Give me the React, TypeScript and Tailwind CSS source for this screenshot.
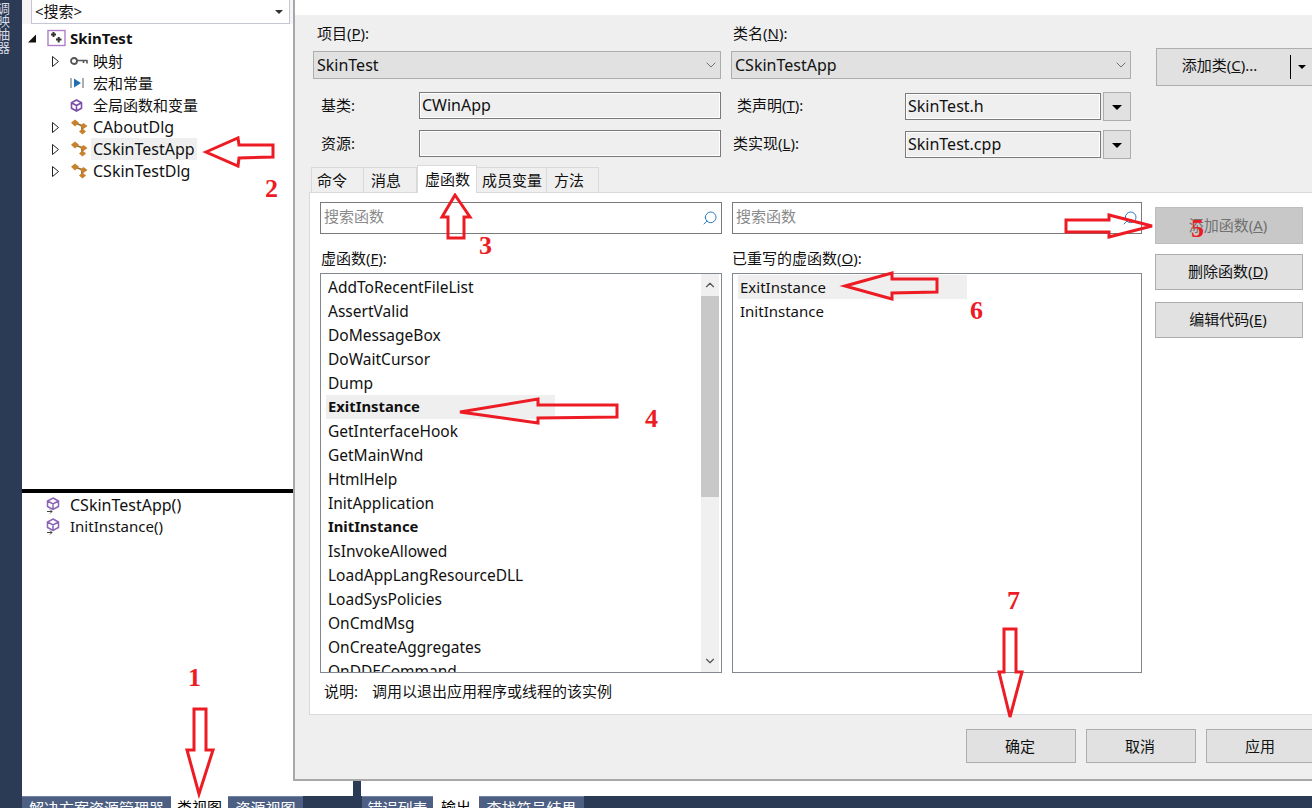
import type { ReactNode } from "react";
import { ChevronDown, ChevronUp, Search } from "lucide-react";

const fn_list = [
  "AddToRecentFileList",
  "AssertValid",
  "DoMessageBox",
  "DoWaitCursor",
  "Dump",
  "ExitInstance",
  "GetInterfaceHook",
  "GetMainWnd",
  "HtmlHelp",
  "InitApplication",
  "InitInstance",
  "IsInvokeAllowed",
  "LoadAppLangResourceDLL",
  "LoadSysPolicies",
  "OnCmdMsg",
  "OnCreateAggregates",
  "OnDDECommand",
];

const Tri = ({ open }: { open?: boolean }) => (
  <svg width="9" height="11" viewBox="0 0 9 11" className="shrink-0">
    {open ? <path d="M0 9.5 L8 9.5 L8 1.5 Z" fill="#111" /> : <path d="M1.5 0.5 L7.5 5.5 L1.5 10.5 Z" fill="#fff" stroke="#222" />}
  </svg>
);

const KeyIcon = () => (
  <svg width="18" height="10" viewBox="0 0 18 10">
    <circle cx="4" cy="5" r="3" fill="none" stroke="#555" strokeWidth="1.8" />
    <path d="M7 4.5 H17.5 M17 4.5 V7.5 M13.5 4.5 V7" fill="none" stroke="#555" strokeWidth="1.6" />
  </svg>
);

const MacroIcon = () => (
  <svg width="14" height="12" viewBox="0 0 14 12">
    <path d="M1 1 V11 M13 1 V11" stroke="#777" strokeWidth="1.2" />
    <path d="M4 1.5 L11 6 L4 10.5 Z" fill="#1f6fb5" />
  </svg>
);

const CubeIcon = () => (
  <svg width="13" height="13" viewBox="0 0 13 13">
    <path d="M6.5 1 L11.5 3.8 V9.2 L6.5 12 L1.5 9.2 V3.8 Z M1.5 3.8 L6.5 6.5 L11.5 3.8 M6.5 6.5 V12" fill="#fff" stroke="#7a4fa8" strokeWidth="1.6" />
  </svg>
);

const ClassIcon = () => (
  <svg width="18" height="16" viewBox="0 0 18 16">
    <path d="M5 4 L13 7 M12 8 L12 12" stroke="#8a6a3a" strokeWidth="1.8" />
    <path d="M5 0.5 L9 3.8 L5 7.5 L1 3.8 Z" fill="#c9822c" />
    <path d="M13.5 4 L17.5 7 L13.5 10 L10 7 Z" fill="#c9822c" />
    <path d="M12.5 9.5 L16 12.5 L12.5 15.5 L9 12.5 Z" fill="#c9822c" />
  </svg>
);

const ProjectIcon = () => (
  <svg width="19" height="18" viewBox="0 0 19 18">
    <rect x="1" y="1.5" width="17" height="15" fill="#fff" stroke="#b07fc8" strokeWidth="1.4" />
    <path d="M4 5.5 H9 M6.5 3 V8 M9 10.5 H14.5 M11.7 8 V13.5" stroke="#333" strokeWidth="2" />
  </svg>
);

const MemberIcon = () => (
  <svg width="14" height="17" viewBox="0 0 14 17">
    <path d="M7 1 L12.5 4 V9.5 L7 12.5 L1.5 9.5 V4 Z M1.5 4 L7 7 L12.5 4 M7 7 V12.5" fill="#fff" stroke="#8a63b5" strokeWidth="1.5" />
    <path d="M1 14.5 H6 M4 12.5 L6 14.5 L4 16.5" fill="none" stroke="#444" strokeWidth="1" />
  </svg>
);

const TreeRow = ({ children, icon, tri, pad = "pl-[29px]", hl, cls = "" }: { children: ReactNode; icon: ReactNode; tri?: boolean; pad?: string; hl?: boolean; cls?: string }) => (
  <div className={`flex h-[22px] items-center ${pad}`}>
    <div className="flex w-[18px] shrink-0">{tri && <Tri />}</div>
    <div className="flex w-[22px] shrink-0 items-center pl-[1px]">{icon}</div>
    <span className={`px-[2px] leading-[22px] ${hl ? "bg-[#efefef]" : ""} ${cls}`}>{children}</span>
  </div>
);

const Combo = ({ value, w }: { value: string; w: string }) => (
  <div className={`flex h-[28px] ${w} items-center justify-between border border-[#adadad] bg-[#e1e1e1] pl-[3px] pr-[1px] text-[16px]`}>
    <span>{value}</span>
    <ChevronDown size={16} color="#555" strokeWidth={1.2} />
  </div>
);

const ReadBox = ({ value, w }: { value?: string; w: string }) => (
  <div className={`h-[27px] ${w} border border-[#7a7a7a] bg-[#efefef] pl-[2px] text-[16px] leading-[25px] shadow-[inset_0_0_0_1px_#fff]`}>{value}</div>
);

const DropBtn = () => (
  <div className="flex h-[29px] w-[28px] items-center justify-center border border-[#adadad] bg-[#e1e1e1]">
    <span className="mt-[1px] h-0 w-0 border-x-[5px] border-t-[5px] border-x-transparent border-t-black" />
  </div>
);

const Btn = ({ children, cls }: { children: ReactNode; cls: string }) => (
  <div className={`flex items-center justify-center border ${cls}`}>{children}</div>
);

const SearchBox = ({ w }: { w: string }) => (
  <div className={`flex h-[32px] ${w} items-center justify-between border border-[#7a7a7a] bg-white pl-[3px] pr-[3px] text-[#8a8a8a]`}>
    <span className="-mt-[3px]">搜索函数</span>
    <Search size={16} color="#2b7bc0" strokeWidth={1.5} className="-scale-x-100" />
  </div>
);

const Tab = ({ children, active, w, pl }: { children: ReactNode; active?: boolean; w: string; pl: string }) => (
  <div
    className={`flex ${w} ${pl} items-center border-[#d9d9d9] ${
      active ? "z-10 -mb-[1px] h-[28px] border-x border-t bg-white" : "h-[25px] border-r border-t bg-[#efefef]"
    }`}
  >
    {children}
  </div>
);

const BottomTab = ({ children, active, w }: { children: ReactNode; active?: boolean; w: string }) => (
  <div className={`h-[24px] ${w} shrink-0 text-center leading-[22px] ${active ? "bg-white text-black" : "border-t border-[#7283a6] bg-[#4d5f82] text-white"}`}>{children}</div>
);

// red annotations drawn on top of the screenshot
const arrows = [
  "206,152 238,138 239,145 273,145 273,157 239,158 238,166",
  "194,709 206,709 206,750 213,750 199,794 187,750 194,750",
  "455,195 470,217 464,217 464,238 448,238 448,217 442,217",
  "1066,220 1109,220 1109,215 1152,226 1109,237 1109,232 1066,232",
  "845,286 892,273 892,279 937,279 937,292 892,293 892,299",
  "460,412 538,399 538,405 617,405 617,417 538,418 538,423",
  "1004,629 1016,629 1016,672 1022,672 1010,717 999,672 1004,672",
];

const marks = [
  { n: "1", cls: "left-[188px] top-[663px]" },
  { n: "2", cls: "left-[265px] top-[174px]" },
  { n: "3", cls: "left-[479px] top-[231px]" },
  { n: "4", cls: "left-[645px] top-[404px]" },
  { n: "5", cls: "left-[1191px] top-[214px]" },
  { n: "6", cls: "left-[970px] top-[296px]" },
  { n: "7", cls: "left-[1007px] top-[586px]" },
];

export default function App() {
  return (
    <div className="relative flex h-[808px] w-[1312px] overflow-hidden bg-[#2b3a55] font-['Noto_Sans','Noto_Sans_CJK_SC',sans-serif] text-[15px] text-[#111]">
      <div className="w-[22px] shrink-0 overflow-hidden">
        <div className="-ml-[4px] mt-[2px] w-[14px] text-[13px] leading-[14px] text-[#d5dae6] [writing-mode:vertical-rl]">调映抽器</div>
      </div>

      <div className="flex min-w-0 flex-1 flex-col">
        <div className="flex h-[796px]">
          {/* class view */}
          <div className="flex w-[271px] shrink-0 flex-col bg-white">
            <div className="h-[24px] bg-[#f5f5f5] pl-[9px] pr-[3px]">
              <div className="flex h-[24px] items-center justify-between border-x border-b border-[#c4c8d4] bg-white pl-[3px] pr-[6px]">
                <span>&lt;搜索&gt;</span>
                <span className="h-0 w-0 border-x-[4px] border-t-[4px] border-x-transparent border-t-[#333]" />
              </div>
            </div>
            <div className="pt-[3px]">
              <TreeRow pad="pl-[6px]" cls="font-bold" icon={<ProjectIcon />}>
                SkinTest
              </TreeRow>
              <div className="-mt-[22px] flex h-[22px] items-center pl-[6px]">
                <Tri open />
              </div>
              <div className="mt-[1px]">
                <TreeRow tri icon={<KeyIcon />}>映射</TreeRow>
                <TreeRow icon={<MacroIcon />}>宏和常量</TreeRow>
                <TreeRow icon={<CubeIcon />}>全局函数和变量</TreeRow>
                <TreeRow tri cls="text-[16px]" icon={<ClassIcon />}>CAboutDlg</TreeRow>
                <TreeRow tri hl cls="text-[16px]" icon={<ClassIcon />}>CSkinTestApp</TreeRow>
                <TreeRow tri cls="text-[16px]" icon={<ClassIcon />}>CSkinTestDlg</TreeRow>
              </div>
            </div>
            <div className="mt-[307px] h-[4px] bg-black" />
            <div>
              <div className="mt-[1px] flex h-[22px] items-center pl-[24px] text-[16px]"><div className="w-[24px]"><MemberIcon /></div>CSkinTestApp()</div>
              <div className="flex h-[21px] items-center pl-[24px]"><div className="w-[24px]"><MemberIcon /></div>InitInstance()</div>
            </div>
          </div>

          {/* add class wizard */}
          <div className="flex min-w-0 flex-1 flex-col bg-white">
            <div className="h-[15px] border-l-2 border-[#a8a8a8] bg-white" />
            <div className="flex h-[766px] flex-col border-b-2 border-l-2 border-[#a8a8a8] bg-[#efefef]">
              <div className="flex h-[150px] shrink-0">
                <div className="w-[436px] shrink-0 pl-[18px] pt-[8px]">
                  <div className="h-[28px] pl-[4px] leading-[20px]">项目(<u>P</u>):</div>
                  <Combo value="SkinTest" w="w-[408px]" />
                  <div className="mt-[13px] flex items-center">
                    <span className="w-[106px] pl-[8px]">基类:</span>
                    <ReadBox value="CWinApp" w="w-[302px]" />
                  </div>
                  <div className="mt-[11px] flex items-center">
                    <span className="w-[106px] pl-[8px]">资源:</span>
                    <ReadBox w="w-[302px]" />
                  </div>
                </div>
                <div className="w-[425px] shrink-0 pt-[8px]">
                  <div className="h-[28px] pl-[2px] leading-[20px]">类名(<u>N</u>):</div>
                  <Combo value="CSkinTestApp" w="w-[400px]" />
                  <div className="mt-[13px] flex items-center">
                    <span className="-mt-[2px] w-[174px] pl-[6px]">类声明(<u>T</u>):</span>
                    <ReadBox value="SkinTest.h" w="w-[196px]" />
                    <div className="ml-[2px]"><DropBtn /></div>
                  </div>
                  <div className="mt-[9px] flex items-center">
                    <span className="-mt-[2px] w-[174px] pl-[2px]">类实现(<u>L</u>):</span>
                    <ReadBox value="SkinTest.cpp" w="w-[196px]" />
                    <div className="ml-[2px]"><DropBtn /></div>
                  </div>
                </div>
                <div className="pt-[33px]">
                  <div className="flex h-[38px] w-[158px] items-center border border-[#adadad] bg-[#e1e1e1]">
                    <span className="w-[133px] pb-[3px] pr-[8px] text-center">添加类(<u>C</u>)...</span>
                    <span className="h-[24px] w-px bg-black" />
                    <span className="ml-[7px] h-0 w-0 border-x-[4px] border-t-[4px] border-x-transparent border-t-black" />
                  </div>
                </div>
              </div>

              <div className="flex h-[550px] shrink-0 flex-col pl-[14px]">
                <div className="flex h-[27px] shrink-0 items-end pl-[2px]">
                  <Tab w="w-[53px]" pl="pl-[5px] border-l">命令</Tab>
                  <Tab w="w-[53px]" pl="pl-[7px]">消息</Tab>
                  <Tab w="w-[60px]" pl="pl-[7px]" active>虚函数</Tab>
                  <Tab w="w-[70px]" pl="pl-[5px]">成员变量</Tab>
                  <Tab w="w-[52px]" pl="pl-[7px]">方法</Tab>
                </div>
                <div className="flex flex-1 border-y border-l border-[#d9d9d9] bg-white pl-[10px] pt-[9px]">
                  <div className="w-[412px] shrink-0">
                    <SearchBox w="w-[402px]" />
                    <div className="h-[39px] pl-[1px] pt-[13px] leading-[22px]">虚函数(<u>F</u>):</div>
                    <div className="flex h-[400px] w-[402px] border border-[#828790] bg-white">
                      <div className="h-[398px] flex-1 overflow-hidden pl-[5px] pt-[1px] text-[15.5px]">
                        {fn_list.map((f) => (
                          <div
                            key={f}
                            className={`h-[24px] w-[229px] whitespace-nowrap px-[2px] ${
                              f === "ExitInstance" ? "bg-[#efefef] text-[14.8px] leading-[23px] font-bold" : f === "InitInstance" ? "text-[14.8px] leading-[23px] font-bold" : "leading-[24px]"
                            }`}
                          >
                            {f}
                          </div>
                        ))}
                      </div>
                      <div className="mr-[2px] flex h-[398px] w-[18px] shrink-0 flex-col bg-[#f0f0f0]">
                        <div className="flex h-[22px] items-center justify-center"><ChevronUp size={14} color="#555" /></div>
                        <div className="h-[201px] bg-[#c8c8c8]" />
                        <div className="flex flex-1 items-end justify-center pb-[4px]"><ChevronDown size={14} color="#555" /></div>
                      </div>
                    </div>
                    <div className="mt-[8px] flex pl-[4px] leading-[20px]">
                      <span className="w-[48px]">说明:</span>
                      <span>调用以退出应用程序或线程的该实例</span>
                    </div>
                  </div>
                  <div className="w-[423px] shrink-0">
                    <SearchBox w="w-[410px]" />
                    <div className="h-[39px] pt-[13px] leading-[22px]">已重写的虚函数(<u>O</u>):</div>
                    <div className="h-[400px] w-[410px] border border-[#828790] bg-white pl-[5px] pt-[1px]">
                      <div className="h-[24px] w-[229px] bg-[#efefef] pl-[2px] leading-[24px]">ExitInstance</div>
                      <div className="h-[24px] pl-[2px] leading-[24px]">InitInstance</div>
                    </div>
                  </div>
                  <div className="flex flex-col gap-[10px] pt-[5px]">
                    <Btn cls="h-[37px] w-[148px] border-[#bdbdbd] bg-[#c8c8c8] pb-[1px] pr-[2px] text-[#707070]"><span>添加函数(<u>A</u>)</span></Btn>
                    <Btn cls="h-[36px] w-[148px] border-[#adadad] bg-[#e1e1e1] pb-[2px] pr-[2px]"><span>删除函数(<u>D</u>)</span></Btn>
                    <Btn cls="mt-[2px] h-[36px] w-[148px] border-[#adadad] bg-[#e1e1e1] pb-[2px] pr-[2px]"><span>编辑代码(<u>E</u>)</span></Btn>
                  </div>
                </div>
              </div>

              <div className="-mr-[4px] flex justify-end gap-[10px] pt-[14px]">
                <Btn cls="h-[34px] w-[110px] border-[#adadad] bg-[#e1e1e1] pr-[2px]">确定</Btn>
                <Btn cls="h-[34px] w-[110px] border-[#adadad] bg-[#e1e1e1] pr-[2px]">取消</Btn>
                <Btn cls="h-[34px] w-[110px] border-[#adadad] bg-[#e1e1e1] pr-[2px]">应用</Btn>
              </div>
            </div>
            <div className="flex h-[15px] bg-white pl-[60px]">
              <div className="h-full w-[8px] bg-[#2b3a55]" />
            </div>
          </div>
        </div>

        <div className="flex h-[12px] overflow-hidden">
          <BottomTab w="w-[149px]">解决方案资源管理器</BottomTab>
          <BottomTab w="w-[57px]" active>类视图</BottomTab>
          <BottomTab w="w-[75px]">资源视图</BottomTab>
          <div className="w-[59px] shrink-0" />
          <BottomTab w="w-[71px]">错误列表</BottomTab>
          <BottomTab w="w-[46px]" active>输出</BottomTab>
          <BottomTab w="w-[105px]">查找符号结果</BottomTab>
        </div>
      </div>

      <svg width="1312" height="808" viewBox="0 0 1312 808" className="pointer-events-none absolute left-0 top-0">
        {arrows.map((p) => (
          <polygon key={p} points={p} fill="none" stroke="#ed1c24" strokeWidth="3" />
        ))}
      </svg>
      {marks.map((m) => (
        <span key={m.n} className={`absolute font-['Liberation_Serif',serif] text-[26px] font-bold leading-[30px] text-[#ed1c24] ${m.cls}`}>
          {m.n}
        </span>
      ))}
    </div>
  );
}
